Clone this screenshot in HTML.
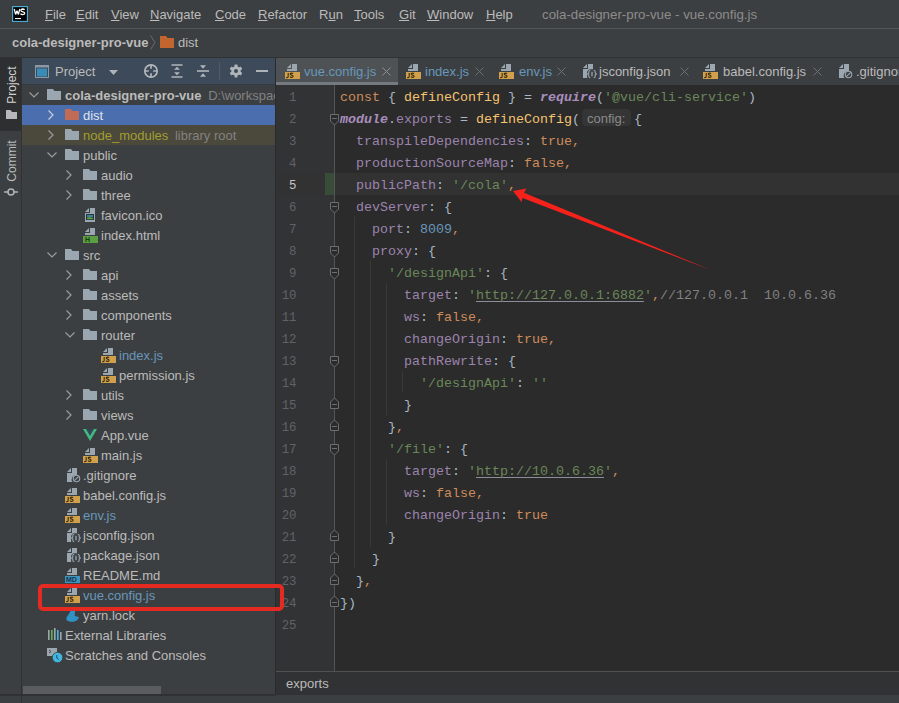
<!DOCTYPE html><html><head><meta charset="utf-8"><style>
*{margin:0;padding:0;box-sizing:border-box}
html,body{width:899px;height:703px;overflow:hidden;background:#3c3f41;font-family:"Liberation Sans",sans-serif;font-size:13px}
.abs{position:absolute}
.ic{position:absolute;overflow:visible}
.t{position:absolute;white-space:pre;height:20px;line-height:20px}
.cl{position:absolute;left:340px;height:22px;line-height:22px;white-space:pre;font-family:"Liberation Mono",monospace;font-size:13.33px;color:#a9b7c6}
.ln{position:absolute;left:266.5px;width:30px;text-align:right;height:22px;line-height:22px;font-family:"Liberation Mono",monospace;font-size:12.4px}
.hint{display:inline-block;width:54px;height:20px;vertical-align:top;position:relative;font-family:"Liberation Sans",sans-serif;font-size:13px;color:#8a8a8a}
.hint:before{content:"";position:absolute;left:2px;top:0px;width:49px;height:17px;background:#353535;border-radius:4px;z-index:-1}
.hint{padding-left:7px;line-height:19px;z-index:1}
</style></head><body>
<svg class="ic" style="left:12px;top:6px;width:16px;height:16px" viewBox="0 0 16 16"><rect x="0.6" y="0.6" width="14.8" height="14.8" fill="#000" stroke="#4cb3dc" stroke-width="1.1"/><path d="M2.2 3L3.6 8.4 5 4.8 6.4 8.4 7.8 3" fill="none" stroke="#fff" stroke-width="1.3" stroke-linejoin="bevel"/><path d="M12.6 3.9Q12 3 10.6 3Q8.8 3.1 8.9 4.4Q9 5.4 10.8 5.8Q12.8 6.2 12.7 7.3Q12.6 8.6 10.6 8.6Q9.1 8.6 8.5 7.6" fill="none" stroke="#fff" stroke-width="1.3"/><rect x="3" y="12" width="6" height="1.1" fill="#fff"/></svg>
<div class="t" style="left:45px;top:5px;color:#bbbbbb"><u>F</u>ile</div><div class="t" style="left:76px;top:5px;color:#bbbbbb"><u>E</u>dit</div><div class="t" style="left:111px;top:5px;color:#bbbbbb"><u>V</u>iew</div><div class="t" style="left:150px;top:5px;color:#bbbbbb"><u>N</u>avigate</div><div class="t" style="left:215px;top:5px;color:#bbbbbb"><u>C</u>ode</div><div class="t" style="left:258px;top:5px;color:#bbbbbb"><u>R</u>efactor</div><div class="t" style="left:319px;top:5px;color:#bbbbbb">R<u>u</u>n</div><div class="t" style="left:354px;top:5px;color:#bbbbbb"><u>T</u>ools</div><div class="t" style="left:399px;top:5px;color:#bbbbbb"><u>G</u>it</div><div class="t" style="left:427px;top:5px;color:#bbbbbb"><u>W</u>indow</div><div class="t" style="left:486px;top:5px;color:#bbbbbb"><u>H</u>elp</div>
<div class="t" style="left:542px;top:5px;color:#8c8c8c;font-size:13.3px">cola-designer-pro-vue - vue.config.js</div>
<div class="abs" style="left:0;top:28px;width:899px;height:1px;background:#515658"></div>
<div class="t" style="left:12px;top:33px;color:#bbbbbb;font-weight:700">cola-designer-pro-vue</div>
<svg class="ic" style="left:150px;top:35px;width:6px;height:15px" viewBox="0 0 6 15"><path d="M0.5 0.5L5 7.5 0.5 14.5" fill="none" stroke="#6b6e70" stroke-width="1"/></svg>
<svg class="ic" style="left:160px;top:36px;width:14px;height:12px" viewBox="0 0 14 12"><path d="M0 0h6l1.5 2H14v10H0z" fill="#c2652f"/></svg>
<div class="t" style="left:178px;top:33px;color:#bbbbbb">dist</div>
<div class="abs" style="left:0;top:57px;width:899px;height:1px;background:#2f3132"></div>
<div class="abs" style="left:0;top:58px;width:21px;height:73px;background:#2d2f30"></div>
<div class="abs" style="left:21px;top:58px;width:1px;height:645px;background:#323232"></div>
<div class="t" style="left:-17.7px;top:75px;color:#d2d2d2;font-size:12px;transform:rotate(-90deg);width:60px;text-align:center">Project</div>
<svg class="ic" style="left:6px;top:110px;width:11px;height:9px" viewBox="0 0 11 9"><path d="M0 0h4.5l1.5 2H11v7H0z" fill="#b4b8bc"/></svg>
<div class="t" style="left:-17.7px;top:151px;color:#bbbbbb;font-size:12px;transform:rotate(-90deg);width:60px;text-align:center">Commit</div>
<svg class="ic" style="left:4px;top:186px;width:14px;height:12px" viewBox="0 0 14 12"><circle cx="7" cy="6" r="3" fill="none" stroke="#aeb3b8" stroke-width="1.6"/><path d="M0 6h4M10 6h4" stroke="#aeb3b8" stroke-width="1.6"/></svg>
<div class="abs" style="left:22px;top:58px;width:253px;height:26px;background:#3d4a59"></div>
<svg class="ic" style="left:35px;top:65px;width:14px;height:13px" viewBox="0 0 14 13"><rect x="0.5" y="0.5" width="13" height="12" fill="none" stroke="#8a98a5" stroke-width="1"/><rect x="1" y="0.5" width="12" height="2" fill="#8a98a5"/><rect x="2" y="3.5" width="10" height="8" fill="#3a8cb8"/></svg>
<div class="t" style="left:55px;top:62px;color:#bbbbbb">Project</div>
<svg class="ic" style="left:109px;top:70px;width:9px;height:5px" viewBox="0 0 9 5"><path d="M0 0h9L4.5 5z" fill="#aeb3b8"/></svg>
<svg class="ic" style="left:143px;top:63px;width:16px;height:16px" viewBox="0 0 16 16"><circle cx="8" cy="8" r="6.2" fill="none" stroke="#b0b5ba" stroke-width="1.7"/><path d="M8 1.5v4.3M8 10.2v4.3M1.5 8h4.3M10.2 8h4.3" stroke="#b0b5ba" stroke-width="1.7"/></svg>
<svg class="ic" style="left:170px;top:63px;width:14px;height:16px" viewBox="0 0 14 16"><path d="M1.5 2h11M1.5 14h11" stroke="#b0b5ba" stroke-width="1.6"/><path d="M7 3.8L9.9 6.7H4.1zM7 12.2L4.1 9.3h5.8z" fill="#b0b5ba"/></svg>
<svg class="ic" style="left:196px;top:63px;width:14px;height:16px" viewBox="0 0 14 16"><path d="M1 8h12" stroke="#b0b5ba" stroke-width="1.6"/><path d="M7 5.8L4 2.3h6zM7 10.2l3 3.5H4z" fill="#b0b5ba"/></svg>
<div class="abs" style="left:219px;top:62px;width:1px;height:18px;background:#525a63"></div>
<svg class="ic" style="left:229px;top:64px;width:14px;height:14px" viewBox="0 0 14 14"><g fill="#b0b5ba"><circle cx="7" cy="7" r="4.7"/><rect x="5.5" y="0.6" width="3" height="12.8" rx="0.6"/><rect x="5.5" y="0.6" width="3" height="12.8" rx="0.6" transform="rotate(60 7 7)"/><rect x="5.5" y="0.6" width="3" height="12.8" rx="0.6" transform="rotate(-60 7 7)"/></g><circle cx="7" cy="7" r="2" fill="#3d4a59"/></svg>
<div class="abs" style="left:256px;top:70px;width:12px;height:2px;background:#aeb3b8"></div>
<div class="abs" style="left:22px;top:84px;width:253px;height:1px;background:#333a42"></div>
<svg class="ic" style="left:28px;top:91px;width:12px;height:8px" viewBox="0 0 12 8"><path d="M1.5 1.5L6 6l4.5-4.5" fill="none" stroke="#9a9da0" stroke-width="1.2"/></svg><svg class="ic" style="left:47px;top:87px;width:16px;height:16px" viewBox="0 0 16 16"><path d="M0 2h6l1.5 2H14v9H0z" fill="#9aa7b0"/></svg><div class="t" style="left:65px;top:86px;color:#bbbbbb;font-weight:700;">cola-designer-pro-vue<span style="color:#828282;font-weight:400;margin-left:3px"> D:\workspace\cola-designer-pro-vue</span></div><div class="abs" style="left:22px;top:105px;width:253px;height:20px;background:#4b6eaf"></div><svg class="ic" style="left:47px;top:109px;width:8px;height:12px" viewBox="0 0 8 12"><path d="M1.5 1.5L6 6l-4.5 4.5" fill="none" stroke="#c9d0da" stroke-width="1.2"/></svg><svg class="ic" style="left:65px;top:107px;width:16px;height:16px" viewBox="0 0 16 16"><path d="M0 2h6l1.5 2H14v9H0z" fill="#bf6b55"/></svg><div class="t" style="left:83px;top:106px;color:#dfe3ea;">dist</div><div class="abs" style="left:22px;top:125px;width:253px;height:20px;background:#4b483c"></div><svg class="ic" style="left:47px;top:129px;width:8px;height:12px" viewBox="0 0 8 12"><path d="M1.5 1.5L6 6l-4.5 4.5" fill="none" stroke="#9a9da0" stroke-width="1.2"/></svg><svg class="ic" style="left:65px;top:127px;width:16px;height:16px" viewBox="0 0 16 16"><path d="M0 2h6l1.5 2H14v9H0z" fill="#9aa7b0"/></svg><div class="t" style="left:83px;top:126px;color:#a29e30;">node_modules<span style="color:#828282;font-weight:400;margin-left:3px"> library root</span></div><svg class="ic" style="left:46px;top:151px;width:12px;height:8px" viewBox="0 0 12 8"><path d="M1.5 1.5L6 6l4.5-4.5" fill="none" stroke="#9a9da0" stroke-width="1.2"/></svg><svg class="ic" style="left:65px;top:147px;width:16px;height:16px" viewBox="0 0 16 16"><path d="M0 2h6l1.5 2H14v9H0z" fill="#9aa7b0"/></svg><div class="t" style="left:83px;top:146px;color:#bbbbbb;">public</div><svg class="ic" style="left:65px;top:169px;width:8px;height:12px" viewBox="0 0 8 12"><path d="M1.5 1.5L6 6l-4.5 4.5" fill="none" stroke="#9a9da0" stroke-width="1.2"/></svg><svg class="ic" style="left:83px;top:167px;width:16px;height:16px" viewBox="0 0 16 16"><path d="M0 2h6l1.5 2H14v9H0z" fill="#9aa7b0"/></svg><div class="t" style="left:101px;top:166px;color:#bbbbbb;">audio</div><svg class="ic" style="left:65px;top:189px;width:8px;height:12px" viewBox="0 0 8 12"><path d="M1.5 1.5L6 6l-4.5 4.5" fill="none" stroke="#9a9da0" stroke-width="1.2"/></svg><svg class="ic" style="left:83px;top:187px;width:16px;height:16px" viewBox="0 0 16 16"><path d="M0 2h6l1.5 2H14v9H0z" fill="#9aa7b0"/></svg><div class="t" style="left:101px;top:186px;color:#bbbbbb;">three</div><svg class="ic" style="left:83px;top:207px;width:16px;height:16px" viewBox="0 0 16 16"><path d="M2 5L6 1v4z" fill="#9aa7b0"/><path d="M7 1h5v14H2V6h5z" fill="#9aa7b0"/><rect x="3" y="7" width="8" height="6" fill="#25343a"/><rect x="4" y="8" width="6" height="2" fill="#3f7f99"/><path d="M4 12.2v-1.4l2.5-.8 3.5 1v1.2z" fill="#5c9e42"/></svg><div class="t" style="left:101px;top:206px;color:#bbbbbb;">favicon.ico</div><svg class="ic" style="left:83px;top:227px;width:16px;height:16px" viewBox="0 0 16 16"><path d="M2 5L6 1v4z" fill="#9aa7b0"/><path d="M7 1h5v7H2V6h5z" fill="#9aa7b0"/><rect x="0" y="9" width="15" height="7" fill="#5c9e42"/><text x="2" y="15.2" font-family="Liberation Sans" font-size="7" font-weight="700" fill="#173d0e">H</text></svg><div class="t" style="left:101px;top:226px;color:#bbbbbb;">index.html</div><svg class="ic" style="left:46px;top:251px;width:12px;height:8px" viewBox="0 0 12 8"><path d="M1.5 1.5L6 6l4.5-4.5" fill="none" stroke="#9a9da0" stroke-width="1.2"/></svg><svg class="ic" style="left:65px;top:247px;width:16px;height:16px" viewBox="0 0 16 16"><path d="M0 2h6l1.5 2H14v9H0z" fill="#9aa7b0"/></svg><div class="t" style="left:83px;top:246px;color:#bbbbbb;">src</div><svg class="ic" style="left:65px;top:269px;width:8px;height:12px" viewBox="0 0 8 12"><path d="M1.5 1.5L6 6l-4.5 4.5" fill="none" stroke="#9a9da0" stroke-width="1.2"/></svg><svg class="ic" style="left:83px;top:267px;width:16px;height:16px" viewBox="0 0 16 16"><path d="M0 2h6l1.5 2H14v9H0z" fill="#9aa7b0"/></svg><div class="t" style="left:101px;top:266px;color:#bbbbbb;">api</div><svg class="ic" style="left:65px;top:289px;width:8px;height:12px" viewBox="0 0 8 12"><path d="M1.5 1.5L6 6l-4.5 4.5" fill="none" stroke="#9a9da0" stroke-width="1.2"/></svg><svg class="ic" style="left:83px;top:287px;width:16px;height:16px" viewBox="0 0 16 16"><path d="M0 2h6l1.5 2H14v9H0z" fill="#9aa7b0"/></svg><div class="t" style="left:101px;top:286px;color:#bbbbbb;">assets</div><svg class="ic" style="left:65px;top:309px;width:8px;height:12px" viewBox="0 0 8 12"><path d="M1.5 1.5L6 6l-4.5 4.5" fill="none" stroke="#9a9da0" stroke-width="1.2"/></svg><svg class="ic" style="left:83px;top:307px;width:16px;height:16px" viewBox="0 0 16 16"><path d="M0 2h6l1.5 2H14v9H0z" fill="#9aa7b0"/></svg><div class="t" style="left:101px;top:306px;color:#bbbbbb;">components</div><svg class="ic" style="left:64px;top:331px;width:12px;height:8px" viewBox="0 0 12 8"><path d="M1.5 1.5L6 6l4.5-4.5" fill="none" stroke="#9a9da0" stroke-width="1.2"/></svg><svg class="ic" style="left:83px;top:327px;width:16px;height:16px" viewBox="0 0 16 16"><path d="M0 2h6l1.5 2H14v9H0z" fill="#9aa7b0"/></svg><div class="t" style="left:101px;top:326px;color:#bbbbbb;">router</div><svg class="ic" style="left:101px;top:347px;width:16px;height:16px" viewBox="0 0 16 16"><path d="M2 5L6 1v4z" fill="#9aa7b0"/><path d="M7 1h5v7H2V6h5z" fill="#9aa7b0"/><rect x="0" y="9" width="15" height="7" fill="#d0a04a"/><path d="M3.2 10v3.4q0 1.2-1.2 1.2H1.2" fill="none" stroke="#3a2c12" stroke-width="1.1"/><path d="M8 10.8q-.4-.7-1.5-.7-1.3 0-1.3 1 0 .7 1.4 1 1.5.3 1.5 1.2 0 1.1-1.5 1.1-1.1 0-1.6-.8" fill="none" stroke="#3a2c12" stroke-width="1.1"/></svg><div class="t" style="left:119px;top:346px;color:#6897bb;">index.js</div><svg class="ic" style="left:101px;top:367px;width:16px;height:16px" viewBox="0 0 16 16"><path d="M2 5L6 1v4z" fill="#9aa7b0"/><path d="M7 1h5v7H2V6h5z" fill="#9aa7b0"/><rect x="0" y="9" width="15" height="7" fill="#d0a04a"/><path d="M3.2 10v3.4q0 1.2-1.2 1.2H1.2" fill="none" stroke="#3a2c12" stroke-width="1.1"/><path d="M8 10.8q-.4-.7-1.5-.7-1.3 0-1.3 1 0 .7 1.4 1 1.5.3 1.5 1.2 0 1.1-1.5 1.1-1.1 0-1.6-.8" fill="none" stroke="#3a2c12" stroke-width="1.1"/></svg><div class="t" style="left:119px;top:366px;color:#bbbbbb;">permission.js</div><svg class="ic" style="left:65px;top:389px;width:8px;height:12px" viewBox="0 0 8 12"><path d="M1.5 1.5L6 6l-4.5 4.5" fill="none" stroke="#9a9da0" stroke-width="1.2"/></svg><svg class="ic" style="left:83px;top:387px;width:16px;height:16px" viewBox="0 0 16 16"><path d="M0 2h6l1.5 2H14v9H0z" fill="#9aa7b0"/></svg><div class="t" style="left:101px;top:386px;color:#bbbbbb;">utils</div><svg class="ic" style="left:65px;top:409px;width:8px;height:12px" viewBox="0 0 8 12"><path d="M1.5 1.5L6 6l-4.5 4.5" fill="none" stroke="#9a9da0" stroke-width="1.2"/></svg><svg class="ic" style="left:83px;top:407px;width:16px;height:16px" viewBox="0 0 16 16"><path d="M0 2h6l1.5 2H14v9H0z" fill="#9aa7b0"/></svg><div class="t" style="left:101px;top:406px;color:#bbbbbb;">views</div><svg class="ic" style="left:83px;top:427px;width:16px;height:16px" viewBox="0 0 16 16"><path d="M0 2h3.2L7 8.6 10.8 2H14L7 14z" fill="#41b883"/><path d="M3.2 2h2.3L7 4.6 8.5 2h2.3L7 8.6z" fill="#35495e"/></svg><div class="t" style="left:101px;top:426px;color:#bbbbbb;">App.vue</div><svg class="ic" style="left:83px;top:447px;width:16px;height:16px" viewBox="0 0 16 16"><path d="M2 5L6 1v4z" fill="#9aa7b0"/><path d="M7 1h5v7H2V6h5z" fill="#9aa7b0"/><rect x="0" y="9" width="15" height="7" fill="#d0a04a"/><path d="M3.2 10v3.4q0 1.2-1.2 1.2H1.2" fill="none" stroke="#3a2c12" stroke-width="1.1"/><path d="M8 10.8q-.4-.7-1.5-.7-1.3 0-1.3 1 0 .7 1.4 1 1.5.3 1.5 1.2 0 1.1-1.5 1.1-1.1 0-1.6-.8" fill="none" stroke="#3a2c12" stroke-width="1.1"/></svg><div class="t" style="left:101px;top:446px;color:#bbbbbb;">main.js</div><svg class="ic" style="left:65px;top:467px;width:16px;height:16px" viewBox="0 0 16 16"><path d="M2 5L6 1v4z" fill="#9aa7b0"/><path d="M7 1h5v7a4.5 4.5 0 0 0-4.5 7H2V6h5z" fill="#9aa7b0"/><circle cx="11.5" cy="11.5" r="3.2" fill="none" stroke="#9aa7b0" stroke-width="1.1"/><path d="M9.3 13.7l4.4-4.4" stroke="#9aa7b0" stroke-width="1.1"/></svg><div class="t" style="left:83px;top:466px;color:#bbbbbb;">.gitignore</div><svg class="ic" style="left:65px;top:487px;width:16px;height:16px" viewBox="0 0 16 16"><path d="M2 5L6 1v4z" fill="#9aa7b0"/><path d="M7 1h5v7H2V6h5z" fill="#9aa7b0"/><rect x="0" y="9" width="15" height="7" fill="#d0a04a"/><path d="M3.2 10v3.4q0 1.2-1.2 1.2H1.2" fill="none" stroke="#3a2c12" stroke-width="1.1"/><path d="M8 10.8q-.4-.7-1.5-.7-1.3 0-1.3 1 0 .7 1.4 1 1.5.3 1.5 1.2 0 1.1-1.5 1.1-1.1 0-1.6-.8" fill="none" stroke="#3a2c12" stroke-width="1.1"/></svg><div class="t" style="left:83px;top:486px;color:#bbbbbb;">babel.config.js</div><svg class="ic" style="left:65px;top:507px;width:16px;height:16px" viewBox="0 0 16 16"><path d="M2 5L6 1v4z" fill="#9aa7b0"/><path d="M7 1h5v7H2V6h5z" fill="#9aa7b0"/><rect x="0" y="9" width="15" height="7" fill="#d0a04a"/><path d="M3.2 10v3.4q0 1.2-1.2 1.2H1.2" fill="none" stroke="#3a2c12" stroke-width="1.1"/><path d="M8 10.8q-.4-.7-1.5-.7-1.3 0-1.3 1 0 .7 1.4 1 1.5.3 1.5 1.2 0 1.1-1.5 1.1-1.1 0-1.6-.8" fill="none" stroke="#3a2c12" stroke-width="1.1"/></svg><div class="t" style="left:83px;top:506px;color:#6897bb;">env.js</div><svg class="ic" style="left:65px;top:527px;width:16px;height:16px" viewBox="0 0 16 16"><path d="M2 5L6 1v4z" fill="#9aa7b0"/><path d="M7 1h5v5.2H8.5a4.4 4.4 0 0 0-2.4 2.6V15H2V6h5z" fill="#9aa7b0"/><path d="M9.3 7.2q-1.5 0-1.5 1.6v1.2l-1.1 1 1.1 1v1.2q0 1.6 1.5 1.6M12.7 7.2q1.5 0 1.5 1.6v1.2l1.1 1-1.1 1v1.2q0 1.6-1.5 1.6" fill="none" stroke="#9aa7b0" stroke-width="1.1"/><path d="M11 8.8v4.4" stroke="#9aa7b0" stroke-width="1.3"/></svg><div class="t" style="left:83px;top:526px;color:#bbbbbb;">jsconfig.json</div><svg class="ic" style="left:65px;top:547px;width:16px;height:16px" viewBox="0 0 16 16"><path d="M2 5L6 1v4z" fill="#9aa7b0"/><path d="M7 1h5v5.2H8.5a4.4 4.4 0 0 0-2.4 2.6V15H2V6h5z" fill="#9aa7b0"/><path d="M9.3 7.2q-1.5 0-1.5 1.6v1.2l-1.1 1 1.1 1v1.2q0 1.6 1.5 1.6M12.7 7.2q1.5 0 1.5 1.6v1.2l1.1 1-1.1 1v1.2q0 1.6-1.5 1.6" fill="none" stroke="#9aa7b0" stroke-width="1.1"/><path d="M11 8.8v4.4" stroke="#9aa7b0" stroke-width="1.3"/></svg><div class="t" style="left:83px;top:546px;color:#bbbbbb;">package.json</div><svg class="ic" style="left:65px;top:567px;width:16px;height:16px" viewBox="0 0 16 16"><path d="M2 5L6 1v4z" fill="#9aa7b0"/><path d="M7 1h5v7H2V6h5z" fill="#9aa7b0"/><rect x="0" y="9" width="15" height="7" fill="#3d94c0"/><text x="1" y="15.2" font-family="Liberation Sans" font-size="7" font-weight="700" fill="#15384a">MD</text></svg><div class="t" style="left:83px;top:566px;color:#bbbbbb;">README.md</div><svg class="ic" style="left:65px;top:587px;width:16px;height:16px" viewBox="0 0 16 16"><path d="M2 5L6 1v4z" fill="#9aa7b0"/><path d="M7 1h5v7H2V6h5z" fill="#9aa7b0"/><rect x="0" y="9" width="15" height="7" fill="#d0a04a"/><path d="M3.2 10v3.4q0 1.2-1.2 1.2H1.2" fill="none" stroke="#3a2c12" stroke-width="1.1"/><path d="M8 10.8q-.4-.7-1.5-.7-1.3 0-1.3 1 0 .7 1.4 1 1.5.3 1.5 1.2 0 1.1-1.5 1.1-1.1 0-1.6-.8" fill="none" stroke="#3a2c12" stroke-width="1.1"/></svg><div class="t" style="left:83px;top:586px;color:#6897bb;">vue.config.js</div><svg class="ic" style="left:65px;top:607px;width:16px;height:16px" viewBox="0 0 16 16"><path d="M5.5 3.2C7.5 2.6 9.6 2.8 10.2 3.6L9.6 8.6C10.8 9.8 12.5 9.6 14 10C13.6 12.8 10.6 14.8 6.8 14.8C3.6 14.8 1.2 13.8 1.4 11.5C1.6 9 4.6 7.5 5.5 3.2Z" fill="#2f93c6"/></svg><div class="t" style="left:83px;top:606px;color:#bbbbbb;">yarn.lock</div><svg class="ic" style="left:47px;top:627px;width:16px;height:16px" viewBox="0 0 16 16"><rect x="1" y="3" width="1.6" height="10" fill="#9aa7b0"/><rect x="4" y="3" width="1.6" height="10" fill="#62b543"/><rect x="7" y="1" width="1.6" height="12" fill="#9aa7b0"/><rect x="10" y="3" width="1.6" height="10" fill="#40b6e0"/><rect x="13" y="5" width="1.6" height="8" fill="#9aa7b0"/></svg><div class="t" style="left:65px;top:626px;color:#bbbbbb;">External Libraries</div><svg class="ic" style="left:47px;top:647px;width:16px;height:16px" viewBox="0 0 16 16"><rect x="0" y="1" width="10" height="8" fill="#9aa7b0"/><path d="M2 3l2 1.5L2 6" fill="none" stroke="#3c3f41" stroke-width="0.9"/><circle cx="10.5" cy="10.5" r="5.2" fill="#40b6e0" stroke="#3c3f41" stroke-width="0.8"/><path d="M9.8 8v3l1.8 1.5" fill="none" stroke="#1d4e63" stroke-width="1"/></svg><div class="t" style="left:65px;top:646px;color:#bbbbbb;">Scratches and Consoles</div>
<div class="abs" style="left:23px;top:686px;width:138px;height:8px;background:#5a5d5f"></div>
<div class="abs" style="left:275px;top:58px;width:1px;height:637px;background:#2b2b2b"></div>
<div class="abs" style="left:276px;top:58px;width:122px;height:27px;background:#4e5254"></div><div class="abs" style="left:276px;top:82px;width:122px;height:3px;background:#747a80"></div><svg class="ic" style="left:285px;top:63px;width:16px;height:16px" viewBox="0 0 16 16"><path d="M2 5L6 1v4z" fill="#9aa7b0"/><path d="M7 1h5v7H2V6h5z" fill="#9aa7b0"/><rect x="0" y="9" width="15" height="7" fill="#d0a04a"/><path d="M3.2 10v3.4q0 1.2-1.2 1.2H1.2" fill="none" stroke="#3a2c12" stroke-width="1.1"/><path d="M8 10.8q-.4-.7-1.5-.7-1.3 0-1.3 1 0 .7 1.4 1 1.5.3 1.5 1.2 0 1.1-1.5 1.1-1.1 0-1.6-.8" fill="none" stroke="#3a2c12" stroke-width="1.1"/></svg><div class="t" style="left:304px;top:62px;color:#6897bb">vue.config.js</div><svg class="ic" style="left:382px;top:67px;width:9px;height:9px" viewBox="0 0 9 9"><path d="M0.5 0.5l8 8M8.5 0.5l-8 8" stroke="#8b8f92" stroke-width="1"/></svg><svg class="ic" style="left:406px;top:63px;width:16px;height:16px" viewBox="0 0 16 16"><path d="M2 5L6 1v4z" fill="#9aa7b0"/><path d="M7 1h5v7H2V6h5z" fill="#9aa7b0"/><rect x="0" y="9" width="15" height="7" fill="#d0a04a"/><path d="M3.2 10v3.4q0 1.2-1.2 1.2H1.2" fill="none" stroke="#3a2c12" stroke-width="1.1"/><path d="M8 10.8q-.4-.7-1.5-.7-1.3 0-1.3 1 0 .7 1.4 1 1.5.3 1.5 1.2 0 1.1-1.5 1.1-1.1 0-1.6-.8" fill="none" stroke="#3a2c12" stroke-width="1.1"/></svg><div class="t" style="left:425px;top:62px;color:#6897bb">index.js</div><svg class="ic" style="left:475px;top:67px;width:9px;height:9px" viewBox="0 0 9 9"><path d="M0.5 0.5l8 8M8.5 0.5l-8 8" stroke="#6e7173" stroke-width="1"/></svg><svg class="ic" style="left:499px;top:63px;width:16px;height:16px" viewBox="0 0 16 16"><path d="M2 5L6 1v4z" fill="#9aa7b0"/><path d="M7 1h5v7H2V6h5z" fill="#9aa7b0"/><rect x="0" y="9" width="15" height="7" fill="#d0a04a"/><path d="M3.2 10v3.4q0 1.2-1.2 1.2H1.2" fill="none" stroke="#3a2c12" stroke-width="1.1"/><path d="M8 10.8q-.4-.7-1.5-.7-1.3 0-1.3 1 0 .7 1.4 1 1.5.3 1.5 1.2 0 1.1-1.5 1.1-1.1 0-1.6-.8" fill="none" stroke="#3a2c12" stroke-width="1.1"/></svg><div class="t" style="left:519px;top:62px;color:#6897bb">env.js</div><svg class="ic" style="left:557px;top:67px;width:9px;height:9px" viewBox="0 0 9 9"><path d="M0.5 0.5l8 8M8.5 0.5l-8 8" stroke="#6e7173" stroke-width="1"/></svg><svg class="ic" style="left:581px;top:63px;width:16px;height:16px" viewBox="0 0 16 16"><path d="M2 5L6 1v4z" fill="#9aa7b0"/><path d="M7 1h5v5.2H8.5a4.4 4.4 0 0 0-2.4 2.6V15H2V6h5z" fill="#9aa7b0"/><path d="M9.3 7.2q-1.5 0-1.5 1.6v1.2l-1.1 1 1.1 1v1.2q0 1.6 1.5 1.6M12.7 7.2q1.5 0 1.5 1.6v1.2l1.1 1-1.1 1v1.2q0 1.6-1.5 1.6" fill="none" stroke="#9aa7b0" stroke-width="1.1"/><path d="M11 8.8v4.4" stroke="#9aa7b0" stroke-width="1.3"/></svg><div class="t" style="left:599px;top:62px;color:#bbbbbb">jsconfig.json</div><svg class="ic" style="left:680px;top:67px;width:9px;height:9px" viewBox="0 0 9 9"><path d="M0.5 0.5l8 8M8.5 0.5l-8 8" stroke="#6e7173" stroke-width="1"/></svg><svg class="ic" style="left:703px;top:63px;width:16px;height:16px" viewBox="0 0 16 16"><path d="M2 5L6 1v4z" fill="#9aa7b0"/><path d="M7 1h5v7H2V6h5z" fill="#9aa7b0"/><rect x="0" y="9" width="15" height="7" fill="#d0a04a"/><path d="M3.2 10v3.4q0 1.2-1.2 1.2H1.2" fill="none" stroke="#3a2c12" stroke-width="1.1"/><path d="M8 10.8q-.4-.7-1.5-.7-1.3 0-1.3 1 0 .7 1.4 1 1.5.3 1.5 1.2 0 1.1-1.5 1.1-1.1 0-1.6-.8" fill="none" stroke="#3a2c12" stroke-width="1.1"/></svg><div class="t" style="left:723px;top:62px;color:#bbbbbb">babel.config.js</div><svg class="ic" style="left:813px;top:67px;width:9px;height:9px" viewBox="0 0 9 9"><path d="M0.5 0.5l8 8M8.5 0.5l-8 8" stroke="#6e7173" stroke-width="1"/></svg><svg class="ic" style="left:837px;top:63px;width:16px;height:16px" viewBox="0 0 16 16"><path d="M2 5L6 1v4z" fill="#9aa7b0"/><path d="M7 1h5v7a4.5 4.5 0 0 0-4.5 7H2V6h5z" fill="#9aa7b0"/><circle cx="11.5" cy="11.5" r="3.2" fill="none" stroke="#9aa7b0" stroke-width="1.1"/><path d="M9.3 13.7l4.4-4.4" stroke="#9aa7b0" stroke-width="1.1"/></svg><div class="t" style="left:856px;top:62px;color:#bbbbbb">.gitignore</div>
<div class="abs" style="left:276px;top:85px;width:59px;height:586px;background:#313335"></div>
<div class="abs" style="left:335px;top:85px;width:564px;height:586px;background:#2b2b2b"></div>
<div class="abs" style="left:276px;top:173px;width:623px;height:22px;background:#323232"></div>
<div class="abs" style="left:325px;top:173px;width:9px;height:22px;background:#384c38"></div>
<div class="abs" style="left:334px;top:85px;width:1px;height:586px;background:#555555"></div>
<div class="abs" style="left:354px;top:217px;width:1px;height:352px;background:#393939"></div><div class="abs" style="left:370px;top:261px;width:1px;height:286px;background:#393939"></div><div class="abs" style="left:386px;top:283px;width:1px;height:132px;background:#393939"></div><div class="abs" style="left:402px;top:371px;width:1px;height:22px;background:#393939"></div><div class="abs" style="left:386px;top:459px;width:1px;height:66px;background:#393939"></div>
<svg class="ic" style="left:329px;top:114px;width:11px;height:12px" viewBox="0 0 11 12"><path d="M1.5 0.5h8v6.5l-4 4-4-4z" fill="#2b2b2b" stroke="#6e6e6e" stroke-width="1"/><path d="M3 4.5h5" stroke="#6e6e6e" stroke-width="1"/></svg><svg class="ic" style="left:329px;top:202px;width:11px;height:12px" viewBox="0 0 11 12"><path d="M1.5 0.5h8v6.5l-4 4-4-4z" fill="#2b2b2b" stroke="#6e6e6e" stroke-width="1"/><path d="M3 4.5h5" stroke="#6e6e6e" stroke-width="1"/></svg><svg class="ic" style="left:329px;top:246px;width:11px;height:12px" viewBox="0 0 11 12"><path d="M1.5 0.5h8v6.5l-4 4-4-4z" fill="#2b2b2b" stroke="#6e6e6e" stroke-width="1"/><path d="M3 4.5h5" stroke="#6e6e6e" stroke-width="1"/></svg><svg class="ic" style="left:329px;top:268px;width:11px;height:12px" viewBox="0 0 11 12"><path d="M1.5 0.5h8v6.5l-4 4-4-4z" fill="#2b2b2b" stroke="#6e6e6e" stroke-width="1"/><path d="M3 4.5h5" stroke="#6e6e6e" stroke-width="1"/></svg><svg class="ic" style="left:329px;top:356px;width:11px;height:12px" viewBox="0 0 11 12"><path d="M1.5 0.5h8v6.5l-4 4-4-4z" fill="#2b2b2b" stroke="#6e6e6e" stroke-width="1"/><path d="M3 4.5h5" stroke="#6e6e6e" stroke-width="1"/></svg><svg class="ic" style="left:329px;top:444px;width:11px;height:12px" viewBox="0 0 11 12"><path d="M1.5 0.5h8v6.5l-4 4-4-4z" fill="#2b2b2b" stroke="#6e6e6e" stroke-width="1"/><path d="M3 4.5h5" stroke="#6e6e6e" stroke-width="1"/></svg><svg class="ic" style="left:329px;top:397px;width:11px;height:12px" viewBox="0 0 11 12"><path d="M1.5 11.5h8V5l-4-4-4 4z" fill="#2b2b2b" stroke="#6e6e6e" stroke-width="1"/><path d="M3 7.5h5" stroke="#6e6e6e" stroke-width="1"/></svg><svg class="ic" style="left:329px;top:419px;width:11px;height:12px" viewBox="0 0 11 12"><path d="M1.5 11.5h8V5l-4-4-4 4z" fill="#2b2b2b" stroke="#6e6e6e" stroke-width="1"/><path d="M3 7.5h5" stroke="#6e6e6e" stroke-width="1"/></svg><svg class="ic" style="left:329px;top:529px;width:11px;height:12px" viewBox="0 0 11 12"><path d="M1.5 11.5h8V5l-4-4-4 4z" fill="#2b2b2b" stroke="#6e6e6e" stroke-width="1"/><path d="M3 7.5h5" stroke="#6e6e6e" stroke-width="1"/></svg><svg class="ic" style="left:329px;top:551px;width:11px;height:12px" viewBox="0 0 11 12"><path d="M1.5 11.5h8V5l-4-4-4 4z" fill="#2b2b2b" stroke="#6e6e6e" stroke-width="1"/><path d="M3 7.5h5" stroke="#6e6e6e" stroke-width="1"/></svg><svg class="ic" style="left:329px;top:573px;width:11px;height:12px" viewBox="0 0 11 12"><path d="M1.5 11.5h8V5l-4-4-4 4z" fill="#2b2b2b" stroke="#6e6e6e" stroke-width="1"/><path d="M3 7.5h5" stroke="#6e6e6e" stroke-width="1"/></svg><svg class="ic" style="left:329px;top:595px;width:11px;height:12px" viewBox="0 0 11 12"><path d="M1.5 11.5h8V5l-4-4-4 4z" fill="#2b2b2b" stroke="#6e6e6e" stroke-width="1"/><path d="M3 7.5h5" stroke="#6e6e6e" stroke-width="1"/></svg>
<div class="cl" style="top:87px"><span style="color:#cf8b5a;">const</span><span style="color:#a9b7c6;"> { </span><span style="color:#f5c36f;">defineConfig</span><span style="color:#a9b7c6;"> } = </span><span style="color:#a88ebd;font-style:italic;font-weight:700">require</span><span style="color:#a9b7c6;">(</span><span style="color:#6a8759;">&#x27;@vue/cli-service&#x27;</span><span style="color:#a9b7c6;">)</span></div><div class="ln" style="top:87px;color:#606366">1</div><div class="cl" style="top:109px"><span style="color:#a88ebd;font-style:italic;font-weight:700">module</span><span style="color:#a9b7c6;">.</span><span style="color:#9c84ae;">exports</span><span style="color:#a9b7c6;"> = </span><span style="color:#f5c36f;">defineConfig</span><span style="color:#a9b7c6;">(</span><span class="hint">config:</span><span style="color:#a9b7c6;">{</span></div><div class="ln" style="top:109px;color:#606366">2</div><div class="cl" style="top:131px">  <span style="color:#9c84ae;">transpileDependencies</span><span style="color:#a9b7c6;">: </span><span style="color:#cf8b5a;">true</span><span style="color:#cf8b5a;">,</span></div><div class="ln" style="top:131px;color:#606366">3</div><div class="cl" style="top:153px">  <span style="color:#9c84ae;">productionSourceMap</span><span style="color:#a9b7c6;">: </span><span style="color:#cf8b5a;">false</span><span style="color:#cf8b5a;">,</span></div><div class="ln" style="top:153px;color:#606366">4</div><div class="cl" style="top:175px">  <span style="color:#9c84ae;">publicPath</span><span style="color:#a9b7c6;">: </span><span style="color:#6a8759;">&#x27;/cola&#x27;</span><span style="color:#cf8b5a;">,</span></div><div class="ln" style="top:175px;color:#c4c4c4">5</div><div class="cl" style="top:197px">  <span style="color:#9c84ae;">devServer</span><span style="color:#a9b7c6;">: {</span></div><div class="ln" style="top:197px;color:#606366">6</div><div class="cl" style="top:219px">    <span style="color:#9c84ae;">port</span><span style="color:#a9b7c6;">: </span><span style="color:#6897bb;">8009</span><span style="color:#cf8b5a;">,</span></div><div class="ln" style="top:219px;color:#606366">7</div><div class="cl" style="top:241px">    <span style="color:#9c84ae;">proxy</span><span style="color:#a9b7c6;">: {</span></div><div class="ln" style="top:241px;color:#606366">8</div><div class="cl" style="top:263px">      <span style="color:#6a8759;">&#x27;/designApi&#x27;</span><span style="color:#a9b7c6;">: {</span></div><div class="ln" style="top:263px;color:#606366">9</div><div class="cl" style="top:285px">        <span style="color:#9c84ae;">target</span><span style="color:#a9b7c6;">: </span><span style="color:#6a8759;">&#x27;</span><span style="color:#6a8759;text-decoration:underline;text-decoration-color:#8b8e96;text-decoration-skip-ink:none;text-underline-offset:2px">http</span><span style="color:#6a8759;text-decoration:underline;text-decoration-color:#8b8e96;text-decoration-skip-ink:none;text-underline-offset:2px">://127.0.0.1:6882</span><span style="color:#6a8759;">&#x27;</span><span style="color:#cf8b5a;">,</span><span style="color:#808080;">//127.0.0.1  10.0.6.36</span></div><div class="ln" style="top:285px;color:#606366">10</div><div class="cl" style="top:307px">        <span style="color:#9c84ae;">ws</span><span style="color:#a9b7c6;">: </span><span style="color:#cf8b5a;">false</span><span style="color:#cf8b5a;">,</span></div><div class="ln" style="top:307px;color:#606366">11</div><div class="cl" style="top:329px">        <span style="color:#9c84ae;">changeOrigin</span><span style="color:#a9b7c6;">: </span><span style="color:#cf8b5a;">true</span><span style="color:#cf8b5a;">,</span></div><div class="ln" style="top:329px;color:#606366">12</div><div class="cl" style="top:351px">        <span style="color:#9c84ae;">pathRewrite</span><span style="color:#a9b7c6;">: {</span></div><div class="ln" style="top:351px;color:#606366">13</div><div class="cl" style="top:373px">          <span style="color:#6a8759;">&#x27;/designApi&#x27;</span><span style="color:#a9b7c6;">: </span><span style="color:#6a8759;">&#x27;&#x27;</span></div><div class="ln" style="top:373px;color:#606366">14</div><div class="cl" style="top:395px">        <span style="color:#a9b7c6;">}</span></div><div class="ln" style="top:395px;color:#606366">15</div><div class="cl" style="top:417px">      <span style="color:#a9b7c6;">}</span><span style="color:#cf8b5a;">,</span></div><div class="ln" style="top:417px;color:#606366">16</div><div class="cl" style="top:439px">      <span style="color:#6a8759;">&#x27;/file&#x27;</span><span style="color:#a9b7c6;">: {</span></div><div class="ln" style="top:439px;color:#606366">17</div><div class="cl" style="top:461px">        <span style="color:#9c84ae;">target</span><span style="color:#a9b7c6;">: </span><span style="color:#6a8759;">&#x27;</span><span style="color:#6a8759;text-decoration:underline;text-decoration-color:#8b8e96;text-decoration-skip-ink:none;text-underline-offset:2px">http</span><span style="color:#6a8759;text-decoration:underline;text-decoration-color:#8b8e96;text-decoration-skip-ink:none;text-underline-offset:2px">://10.0.6.36</span><span style="color:#6a8759;">&#x27;</span><span style="color:#cf8b5a;">,</span></div><div class="ln" style="top:461px;color:#606366">18</div><div class="cl" style="top:483px">        <span style="color:#9c84ae;">ws</span><span style="color:#a9b7c6;">: </span><span style="color:#cf8b5a;">false</span><span style="color:#cf8b5a;">,</span></div><div class="ln" style="top:483px;color:#606366">19</div><div class="cl" style="top:505px">        <span style="color:#9c84ae;">changeOrigin</span><span style="color:#a9b7c6;">: </span><span style="color:#cf8b5a;">true</span></div><div class="ln" style="top:505px;color:#606366">20</div><div class="cl" style="top:527px">      <span style="color:#a9b7c6;">}</span></div><div class="ln" style="top:527px;color:#606366">21</div><div class="cl" style="top:549px">    <span style="color:#a9b7c6;">}</span></div><div class="ln" style="top:549px;color:#606366">22</div><div class="cl" style="top:571px">  <span style="color:#a9b7c6;">}</span><span style="color:#cf8b5a;">,</span></div><div class="ln" style="top:571px;color:#606366">23</div><div class="cl" style="top:593px"><span style="color:#a9b7c6;">})</span></div><div class="ln" style="top:593px;color:#606366">24</div><div class="cl" style="top:615px"></div><div class="ln" style="top:615px;color:#606366">25</div>
<div class="abs" style="left:276px;top:671px;width:623px;height:1px;background:#515151"></div>
<div class="abs" style="left:276px;top:672px;width:623px;height:23px;background:#303234"></div>
<div class="t" style="left:286px;top:674px;color:#bbbbbb">exports</div>
<div class="abs" style="left:0;top:694px;width:276px;height:2px;background:#2f3132"></div>
<div class="abs" style="left:38px;top:584px;width:246px;height:27px;border:4px solid #e42a21;border-radius:5px"></div>
<svg class="ic" style="left:0;top:0;width:899px;height:703px" viewBox="0 0 899 703"><path d="M513 191L526.5 188.5 524 192.7 712 270.5 522.5 198 521.5 202z" fill="#f5221b"/></svg>
</body></html>
